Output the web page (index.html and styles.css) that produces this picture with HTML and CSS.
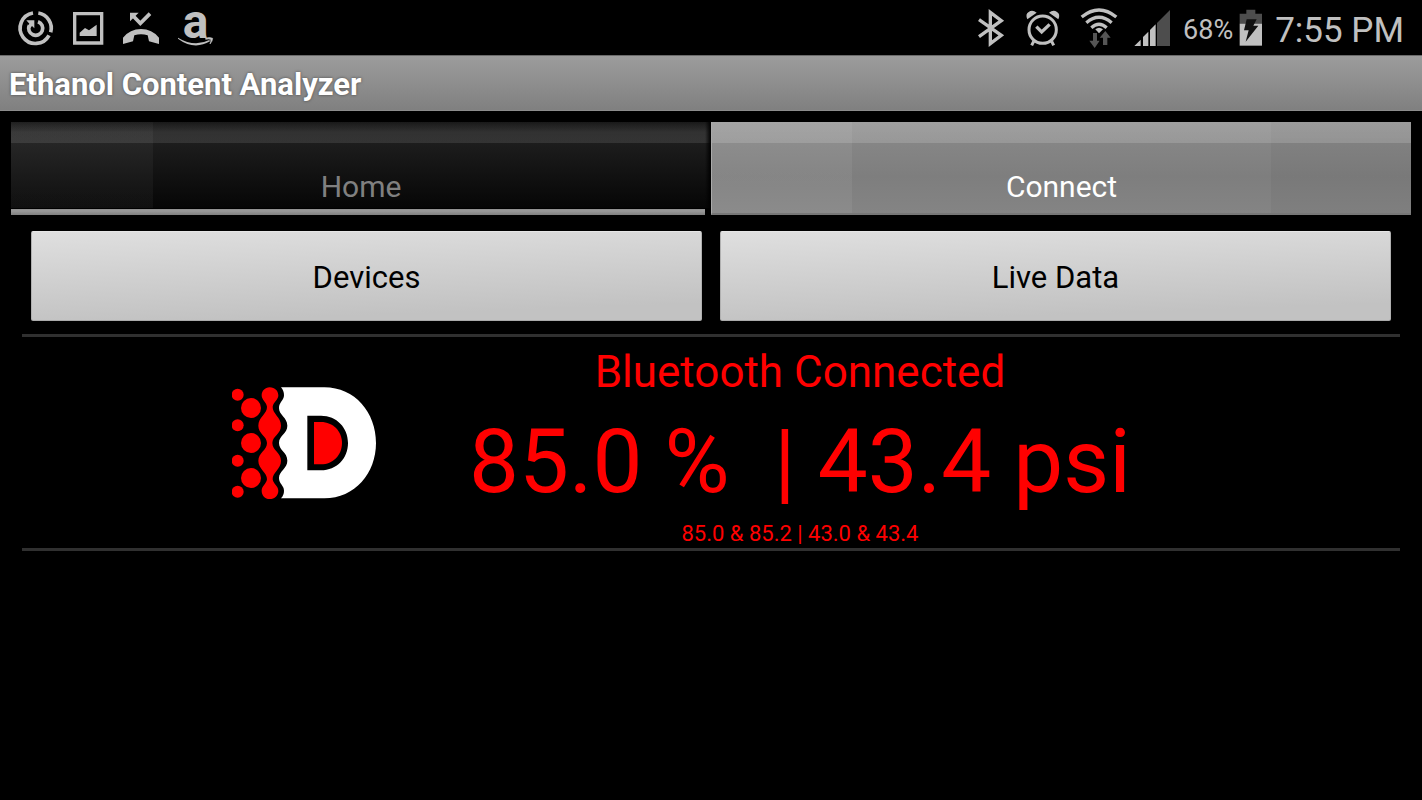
FILE: index.html
```html
<!DOCTYPE html>
<html lang="en">
<head>
  <meta charset="UTF-8">
  <meta name="viewport" content="width=device-width, initial-scale=1">
  <title>Ethanol Content Analyzer</title>
  <link rel="stylesheet" href="styles.css">
</head>
<body>

  <!-- Status bar -->
  <div class="status-bar">
    <div class="notifications">
      <svg class="icon" width="36" height="36" viewBox="54 30 108 108" aria-hidden="true">
        <g fill="none" stroke="#c0c0c0" stroke-width="11">
          <path d="M99 39 A46 46 0 1 0 147 106"/>
          <path d="M115 39 A46 46 0 0 1 152 97"/>
          <path d="M114 65 A21 21 0 1 1 88 76"/>
        </g>
        <path d="M79 61H103V85L96 78L88 88L81 81L88 71Z" fill="#c0c0c0"/>
      </svg>
      <svg class="icon" width="32" height="36" viewBox="217 30 96 108" aria-hidden="true">
        <path d="M225 41H306V129H225Z" fill="none" stroke="#c0c0c0" stroke-width="10"/>
        <path d="M240 108V98L256 84L268 91L291 74V108Z" fill="#c0c0c0"/>
      </svg>
      <svg class="icon" width="38" height="36" viewBox="369 30 114 108" aria-hidden="true">
        <path d="M399 44L424 70L453 41" fill="none" stroke="#c0c0c0" stroke-width="11"/>
        <path d="M393 38H419L393 64Z" fill="#c0c0c0"/>
        <path d="M372 132V113Q393 87 426 87Q459 87 480 113V132L450 124L446 106Q426 100 406 106L402 124Z" fill="#c0c0c0"/>
      </svg>
      <svg class="icon" width="36" height="36" viewBox="534 30 108 108" aria-hidden="true">
        <text class="store-letter" x="548" y="115">a</text>
        <path d="M534 113Q583 143 628 120L630 124Q582 152 534 116Z" fill="#c0c0c0"/>
        <path d="M617 115Q628 110 638 115Q638 123 630 132Q634 122 632 118Q626 116 617 118Z" fill="#c0c0c0" stroke="#c0c0c0" stroke-width="2"/>
      </svg>
    </div>

    <div class="system">
      <svg class="icon" width="26" height="38" viewBox="54 28 78 114" aria-hidden="true">
        <path d="M57 60L124 107L91 132V38L124 63L57 111" fill="none" stroke="#c0c0c0" stroke-width="10"/>
      </svg>
      <svg class="icon" width="34" height="38" viewBox="202 28 102 114" aria-hidden="true">
        <circle cx="252" cy="90" r="41" fill="none" stroke="#c0c0c0" stroke-width="9"/>
        <path d="M233 81L249 97L273 74" fill="none" stroke="#c0c0c0" stroke-width="10"/>
        <path d="M225 125L219 137M279 125L285 137" stroke="#c0c0c0" stroke-width="9"/>
        <path d="M206 59Q199 43 210 37Q221 29 234 39ZM299 59Q306 43 295 37Q284 29 271 39Z" fill="#c0c0c0"/>
      </svg>
      <svg class="icon wifi" width="38" height="40" viewBox="361 24 114 120" aria-hidden="true">
        <g fill="none" stroke="#c0c0c0" stroke-width="10">
          <path d="M366 51Q418 9 470 51"/>
          <path d="M380 68Q418 36 456 68"/>
          <path d="M395 83Q418 63 441 83"/>
        </g>
        <path d="M407 88Q418 79 430 88L418 100Z" fill="#c0c0c0"/>
        <path d="M400 99H412V122H420L405 144L389 122H400ZM430 135H443V113H453L437 93L420 113H430Z" fill="#555"/>
      </svg>
      <svg class="icon" width="37" height="38" viewBox="522 28 111 114" aria-hidden="true">
        <path d="M523 139L542 120V139ZM549 139V112L565 96V139ZM570 139V91L587 74V139Z" fill="#c0c0c0"/>
        <path d="M591 139V70L630 31V139Z" fill="#4d4d4d"/>
      </svg>
      <span class="battery-level">68%</span>
      <svg class="icon" width="24" height="38" viewBox="177 28 72 114" aria-hidden="true">
        <path d="M179 72V42H199V30H226V42H246V72Z" fill="#4d4d4d"/>
        <path d="M179 72H246V138H179Z" fill="#c0c0c0"/>
        <path d="M200 59H230L220 78H235L197 126L206 92H192Z" fill="#111"/>
      </svg>
      <span class="clock">7:55 PM</span>
    </div>
  </div>

  <!-- App title -->
  <header class="title-bar">
    <h1>Ethanol Content Analyzer</h1>
  </header>

  <main>
    <nav class="tabs">
      <button type="button" class="tab tab-current">Home</button>
      <button type="button" class="tab tab-other">Connect</button>
    </nav>

    <div class="actions">
      <button type="button" class="action">Devices</button>
      <button type="button" class="action">Live Data</button>
    </div>

    <section class="readings">
      <svg class="logo" width="144" height="112" viewBox="63 47 432 336" aria-hidden="true">
        <g fill="#f00">
          <circle cx="80" cy="70" r="18"/>
          <circle cx="80" cy="162" r="18"/>
          <circle cx="80" cy="268" r="18"/>
          <circle cx="80" cy="361" r="18"/>
          <circle cx="120" cy="110" r="30"/>
          <circle cx="120" cy="215" r="30"/>
          <circle cx="120" cy="320" r="30"/>
          <path d="M176 48C192 48 202 59 202 72C202 86 187 92 185 106C184 127 210 137 210 163C210 188 184 194 184 215C184 237 210 244 210 268C210 294 184 303 185 324C187 338 202 344 202 358C202 372 191 383 176 383C162 383 152 372 152 358C152 344 166 338 168 324C169 303 142 294 142 268C142 244 168 237 168 215C168 194 142 188 142 163C142 137 169 127 168 106C166 92 152 86 152 72C152 59 162 48 176 48Z"/>
          <path d="M309 152H330C366 152 393 180 393 215C393 251 366 279 330 279H309Z"/>
        </g>
        <path fill="#fff" fill-rule="evenodd" d="M210 48H340C432 48 495 124 495 215C495 306 432 381 340 381H210C216 374 219 367 219 358C219 342 204 338 204 320C204 298 229 292 229 268C229 242 204 238 204 215C204 191 229 187 229 163C229 138 204 132 204 110C204 93 219 87 219 72C219 62 216 55 210 48ZM289 133V297H330C377 297 411 261 411 215C411 169 377 133 330 133Z"/>
      </svg>
      <div class="values">
        <p class="connection">Bluetooth Connected</p>
        <p class="current">85.0 %&nbsp; | 43.4 psi</p>
        <p class="range">85.0 &amp; 85.2 | 43.0 &amp; 43.4</p>
      </div>
    </section>
  </main>

</body>
</html>
```
FILE: styles.css
```css
* {
  box-sizing: border-box;
}
body {
  margin: 0;
  background: #000;
  color: #fff;
  font-family: Roboto, sans-serif;
}
button {
  border: none;
  font-family: inherit;
  cursor: pointer;
}

/* Status bar */
.status-bar {
  display: flex;
  align-items: center;
  justify-content: space-between;
  height: 55px;
  padding: 0 18px;
  color: #c0c0c0;
}
.notifications,
.system {
  display: flex;
  align-items: center;
}
.notifications {
  gap: 18px;
}
.icon {
  display: block;
  flex: none;
  overflow: visible;
}
.system .icon {
  margin-left: 22px;
}
.system .wifi {
  margin-left: 20px;
}
.system .wifi + .icon {
  margin-left: 16px;
}
.system .battery-level + .icon {
  margin-left: 6px;
}
.store-letter {
  font-size: 144px;
  font-weight: bold;
  fill: #c0c0c0;
}
.battery-level {
  margin: 4px 0 0 12px;
  font-size: 27px;
}
.clock {
  margin: 6px 0 0 12px;
  font-size: 35px;
}

/* Title */
.title-bar {
  display: flex;
  align-items: center;
  height: 56px;
  padding: 2px 9px 0;
  background: linear-gradient(#9c9c9c, #808080);
  border-top: 1px solid #6a6a6a;
  border-bottom: 1px solid #8c8c8c;
}
h1 {
  margin: 0;
  font-size: 31px;
  font-weight: bold;
  text-shadow: 0 0 3px rgba(0, 0, 0, 0.5);
}

main {
  padding: 11px 11px 0;
}

/* Tabs */
.tabs {
  display: grid;
  grid-template-columns: 1fr 1fr;
  height: 93px;
}
.tab {
  padding: 36px 0 0;
  font-size: 30px;
}
.tab-current {
  color: #808080;
  background:
    linear-gradient(#8e8e8e, #9a9a9a 30%, #808080) left bottom / calc(100% - 6px) 6px no-repeat,
    linear-gradient(#000, #000) left bottom / 100% 7px no-repeat,
    linear-gradient(90deg, transparent, #000) right top / 6px 100% no-repeat,
    linear-gradient(rgba(0, 0, 0, 0.3), rgba(255, 255, 255, 0.08) 50%, rgba(255, 255, 255, 0.1)) left top / 100% 21px no-repeat,
    linear-gradient(90deg, rgba(255, 255, 255, 0.04) 142px, transparent 142px),
    linear-gradient(#242424, #1c1c1c 25%, #060606 92%);
}
.tab-other {
  padding-top: 38px;
  color: #fff;
  border-left: 1px solid #aaa;
  border-bottom: 2px solid #777;
  background:
    linear-gradient(rgba(255, 255, 255, 0.18), rgba(255, 255, 255, 0.15)) left top / 100% 21px no-repeat,
    linear-gradient(90deg, rgba(255, 255, 255, 0.06) 20%, transparent 20%, transparent 80%, rgba(0, 0, 0, 0.04) 80%),
    linear-gradient(#8a8a8a, #7e7e7e 60%, #848484);
}

/* Buttons */
.actions {
  display: grid;
  grid-template-columns: 1fr 1fr;
  gap: 18px;
  margin: 16px 20px 13px;
}
.action {
  height: 90px;
  padding: 3px 0 0;
  color: #000;
  font-size: 31px;
  background: linear-gradient(178deg, #dfdfdf, #c2c2c2 85%);
  border: 1px solid;
  border-color: #e6e6e6 #b0b0b0 #aaa #b0b0b0;
  border-radius: 2px;
}

/* Sensor readings */
.readings {
  display: flex;
  align-items: center;
  gap: 93px;
  margin: 0 11px;
  padding-left: 15%;
  border-top: 3px solid #303030;
  border-bottom: 3px solid #303030;
}
.logo {
  flex: none;
}
.values {
  padding-top: 3px;
  color: #f00;
  text-align: center;
}
.values p {
  margin: 0;
  white-space: nowrap;
}
.values .connection {
  font-size: 44px;
  line-height: 64px;
}
.values .current {
  font-size: 89px;
  line-height: 116px;
}
.values .range {
  font-size: 22px;
  line-height: 28px;
}
```
